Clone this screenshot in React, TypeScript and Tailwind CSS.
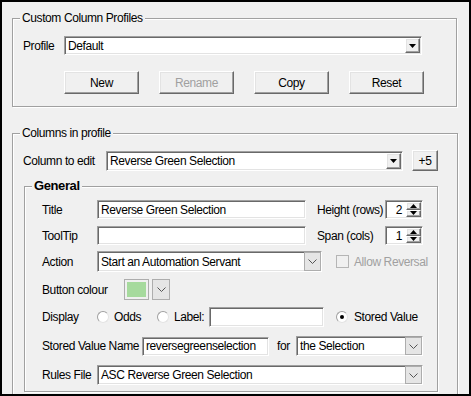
import React from 'react';

// classic win32 bevels
const sunken = "bg-white border border-t-[#a0a0a0] border-l-[#a0a0a0] border-r-white border-b-white shadow-[inset_1px_1px_0_#696969,inset_-1px_-1px_0_#e3e3e3]";
const raised = "bg-[#f0f0f0] border border-t-white border-l-white border-r-[#696969] border-b-[#696969] shadow-[inset_-1px_-1px_0_#a0a0a0,inset_1px_1px_0_#e3e3e3]";

const GroupBox = ({ title, bold, className, children }: { title: string; bold?: boolean; className?: string; children?: React.ReactNode }) => (
    <div className={`relative border border-[#a0a0a0] shadow-[1px_1px_0_#fff,inset_1px_1px_0_#fff] ${className ?? ''}`}>
        <span className={`absolute -top-[8px] left-[7px] bg-[#f0f0f0] px-[2px] leading-[14px] ${bold ? 'font-bold text-[13px]' : ''}`}>
            {title}
        </span>
        {children}
    </div>
);

const Triangle = ({ up }: { up?: boolean }) => (
    <svg width="7" height="4" viewBox="0 0 7 4">
        <path d={up ? "M0 4h7L3.5 0z" : "M0 0h7L3.5 4z"} fill="#000" />
    </svg>
);

const Chevron = () => (
    <svg width="9" height="5" viewBox="0 0 9 5">
        <path d="M0.5 0.5L4.5 4.5L8.5 0.5" stroke="#555" fill="none" />
    </svg>
);

const ClassicCombo = ({ value, className }: { value: string; className: string }) => (
    <div className={`${sunken} flex items-stretch p-[1px] ${className}`}>
        <span className="flex-1 flex items-center pl-[2px]">{value}</span>
        <div className={`${raised} w-[15px] flex items-center justify-center`}>
            <Triangle />
        </div>
    </div>
);

const Combo = ({ value, className }: { value: string; className: string }) => (
    <div className={`${sunken} flex items-stretch ${className}`}>
        <span className="flex-1 flex items-center pl-[3px]">{value}</span>
        <div className="w-[17px] border border-[#adadad] bg-[#e5e5e5] flex items-center justify-center">
            <Chevron />
        </div>
    </div>
);

const TextBox = ({ value, className }: { value?: string; className: string }) => (
    <div className={`${sunken} flex items-center pl-[3px] ${className}`}>{value}</div>
);

const Spin = ({ value }: { value: string }) => (
    <div className={`${sunken} flex items-stretch p-[1px] w-[38px] h-[19px]`}>
        <span className="flex-1 flex items-center justify-end pr-[4px]">{value}</span>
        <div className="w-[15px] flex flex-col">
            <div className={`${raised} flex-1 flex items-center justify-center`}><Triangle up /></div>
            <div className={`${raised} flex-1 flex items-center justify-center`}><Triangle /></div>
        </div>
    </div>
);

const Button = ({ children, disabled }: { children: React.ReactNode; disabled?: boolean }) => (
    <div className={`${raised} w-[75px] h-[23px] flex items-center justify-center ${disabled ? 'text-[#a0a0a0]' : ''}`}>
        {children}
    </div>
);

const Radio = ({ checked }: { checked?: boolean }) => (
    <div className="w-[12px] h-[12px] rounded-full bg-white border border-t-[#a0a0a0] border-l-[#a0a0a0] border-r-[#e3e3e3] border-b-[#e3e3e3] flex items-center justify-center">
        {checked && <div className="w-[4px] h-[4px] rounded-full bg-black" />}
    </div>
);

export default function App() {
    return (
        <div className="w-[471px] h-[396px] overflow-hidden border-2 border-black bg-[#f0f0f0] text-[12px] tracking-[-0.4px] leading-none text-black font-['Liberation_Sans',Arial,sans-serif]">
            <GroupBox title="Custom Column Profiles" className="ml-[10px] mt-[16px] w-[445px] h-[89px]">
                <div className="pl-[10px] pt-[17px]">
                    <div className="flex items-center h-[19px]">
                        <span className="w-[41px]">Profile</span>
                        <ClassicCombo value="Default" className="w-[358px] h-[19px]" />
                    </div>
                    <div className="flex gap-[20px] ml-[41px] mt-[16px]">
                        <Button>New</Button>
                        <Button disabled>Rename</Button>
                        <Button>Copy</Button>
                        <Button>Reset</Button>
                    </div>
                </div>
            </GroupBox>

            <GroupBox title="Columns in profile" className="ml-[10px] mt-[26px] w-[446px] h-[400px]">
                <div className="flex items-center h-[21px] pl-[10px] mt-[16px]">
                    <span className="w-[83px]">Column to edit</span>
                    <ClassicCombo value="Reverse Green Selection" className="w-[297px] h-[20px]" />
                    <div className={`${raised} ml-[9px] w-[26px] h-[21px] flex items-center justify-center`}>+5</div>
                </div>

                <GroupBox title="General" bold className="ml-[11px] mt-[15px] w-[414px] h-[206px]">
                    <div className="flex flex-col pl-[17px] pt-[13px]">
                        <div className="flex items-center h-[19px]">
                            <span className="w-[55px]">Title</span>
                            <TextBox value="Reverse Green Selection" className="w-[209px] h-[19px]" />
                            <span className="ml-[11px] w-[68px]">Height (rows)</span>
                            <Spin value="2" />
                        </div>
                        <div className="flex items-center h-[19px] mt-[7px]">
                            <span className="w-[55px]">ToolTip</span>
                            <TextBox className="w-[209px] h-[19px]" />
                            <span className="ml-[11px] w-[68px]">Span (cols)</span>
                            <Spin value="1" />
                        </div>
                        <div className="flex items-center h-[21px] mt-[6px]">
                            <span className="w-[55px]">Action</span>
                            <Combo value="Start an Automation Servant" className="w-[225px] h-[21px]" />
                            <div className="ml-[14px] w-[13px] h-[13px] border border-[#b5b5b5] bg-[#f0f0f0]" />
                            <span className="ml-[5px] text-[#a0a0a0]">Allow Reversal</span>
                        </div>
                        <div className="flex items-center h-[21px] mt-[7px]">
                            <span className="w-[82px]">Button colour</span>
                            <div className="w-[25px] h-[21px] border border-[#adadad] p-[2px]">
                                <div className="w-full h-full bg-[#a6da9d]" />
                            </div>
                            <div className="ml-[3px] w-[18px] h-[21px] border border-[#adadad] bg-[#e5e5e5] flex items-center justify-center">
                                <Chevron />
                            </div>
                        </div>
                        <div className="flex items-center h-[20px] mt-[7px]">
                            <span className="w-[55px]">Display</span>
                            <div className="w-[60px] flex items-center">
                                <Radio />
                                <span className="ml-[5px]">Odds</span>
                            </div>
                            <div className="w-[52px] flex items-center">
                                <Radio />
                                <span className="ml-[5px]">Label:</span>
                            </div>
                            <TextBox className="w-[115px] h-[20px]" />
                            <div className="ml-[12px] flex items-center">
                                <Radio checked />
                                <span className="ml-[6px]">Stored Value</span>
                            </div>
                        </div>
                        <div className="flex items-center h-[20px] mt-[9px]">
                            <span className="w-[100px]">Stored Value Name</span>
                            <TextBox value="reversegreenselection" className="w-[127px] h-[19px] pl-[1px]" />
                            <span className="ml-[8px] w-[19px]">for</span>
                            <Combo value="the Selection" className="w-[127px] h-[20px]" />
                        </div>
                        <div className="flex items-center h-[20px] mt-[9px]">
                            <span className="w-[55px]">Rules File</span>
                            <Combo value="ASC Reverse Green Selection" className="w-[326px] h-[20px]" />
                        </div>
                    </div>
                </GroupBox>
            </GroupBox>
        </div>
    );
}
